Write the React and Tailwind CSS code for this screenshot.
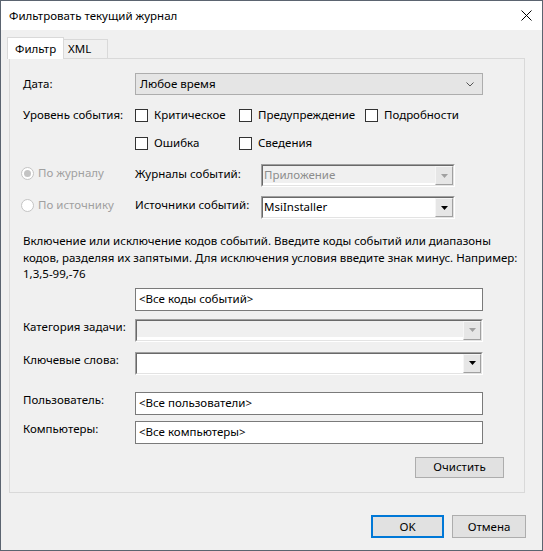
import React from 'react';

const font = { fontFamily: '"Noto Sans", "Open Sans", sans-serif' };

const Arrow = ({ disabled }) => (
  <svg width="7" height="4" viewBox="0 0 7 4">
    <path d="M0 0 H7 L3.5 4 Z" fill={disabled ? '#a0a0a0' : '#000'} />
  </svg>
);

// old-style sunken combo box with a raised drop button
const ClassicCombo = ({ text, disabled, className = '' }) => (
  <div
    className={`h-[23px] border border-t-[#a0a0a0] border-l-[#a0a0a0] border-b-white border-r-white ${className}`}
  >
    <div className="h-full flex border border-t-[#696969] border-l-[#696969] border-b-[#e3e3e3] border-r-[#e3e3e3]">
      <div
        className={`flex-1 flex flex-col ${disabled ? 'bg-[#f0f0f0]' : 'bg-white'}`}
      >
        <div className={`flex-1 pl-[1px] leading-[17px] ${disabled ? 'text-[#8d8d8d]' : 'text-black'}`}>
          {text}
        </div>
        {disabled && <div className="h-[3px] bg-white" />}
      </div>
      <div className="w-[18px] h-full flex items-center justify-center bg-[#e6e6e6] border border-t-[#f6f6f6] border-l-[#f6f6f6] border-b-[#a0a0a0] border-r-[#a0a0a0]">
        <Arrow disabled={disabled} />
      </div>
    </div>
  </div>
);

const TextBox = ({ text }) => (
  <div className="h-[23px] bg-white border border-[#7a7a7a] flex items-center pl-[3px]">{text}</div>
);

const CheckBox = ({ label, className = '' }) => (
  <div className={`flex items-center ${className}`}>
    <div className="w-[13px] h-[13px] bg-white border border-[#333]" />
    <span className="ml-[6px]">{label}</span>
  </div>
);

const Radio = ({ label, checked }) => (
  <div className="flex items-center -ml-[2px] w-[114px] h-[18px]">
    <div className="w-[13px] h-[13px] rounded-full bg-white border border-[#c4c4c4] flex items-center justify-center">
      {checked && <div className="w-[7px] h-[7px] rounded-full bg-[#c4c4c4]" />}
    </div>
    <span className="ml-[4px] text-[#a0a0a0]">{label}</span>
  </div>
);

const Button = ({ children, className = '' }) => (
  <div className={`bg-[#e1e1e1] border border-[#adadad] flex items-center justify-center ${className}`}>
    {children}
  </div>
);

export default function App() {
  return (
    <div
      className="w-[543px] h-[551px] flex flex-col bg-[#f0f0f0] border border-[#5b6470] text-[11.5px] text-black"
      style={font}
    >
      {/* Title bar */}
      <div className="h-[29px] bg-white flex items-center justify-between pl-[8px] pr-[10px]">
        <span>Фильтровать текущий журнал</span>
        <svg width="11" height="11" viewBox="0 0 11 11">
          <path d="M0.5 0.5 L10.5 10.5 M10.5 0.5 L0.5 10.5" stroke="#000" strokeWidth="1" />
        </svg>
      </div>

      {/* Tabs */}
      <div className="mt-[7px] ml-[6px] flex items-end relative z-10 -mb-px">
        <div className="h-[22px] w-[57px] bg-white border border-b-0 border-[#d9d9d9] flex items-center pl-[7px]">
          Фильтр
        </div>
        <div className="h-[19px] w-[44px] mb-px bg-[#f0f0f0] border border-b-0 border-l-0 border-[#d9d9d9] flex items-center pl-[4px]">
          XML
        </div>
      </div>

      {/* Tab panel */}
      <div className="ml-[8px] w-[516px] h-[435px] border border-[#d9d9d9] pl-[13px] flex flex-col">
        {/* Date */}
        <div className="mt-[14px] flex h-[22px]">
          <div className="w-[112px] flex items-center">Дата:</div>
          <div className="w-[348px] h-[22px] bg-[#e5e5e5] border border-[#adadad] flex items-center justify-between pl-[4px] pr-[8px]">
            <span>Любое время</span>
            <svg width="8" height="5" viewBox="0 0 8 5">
              <path d="M0.5 0.5 L4 4 L7.5 0.5" stroke="#555" fill="none" strokeWidth="1" />
            </svg>
          </div>
        </div>

        {/* Event level */}
        <div className="mt-[10px] flex h-[20px] items-center">
          <div className="w-[112px]">Уровень события:</div>
          <CheckBox label="Критическое" className="w-[104px]" />
          <CheckBox label="Предупреждение" className="w-[126px]" />
          <CheckBox label="Подробности" />
        </div>
        <div className="mt-[8px] flex h-[20px] items-center">
          <div className="w-[112px]" />
          <CheckBox label="Ошибка" className="w-[104px]" />
          <CheckBox label="Сведения" />
        </div>

        {/* Logs / sources */}
        <div className="mt-[11px] flex h-[23px] items-start">
          <Radio label="По журналу" checked />
          <div className="w-[126px] leading-[19px]">Журналы событий:</div>
          <ClassicCombo text="Приложение" disabled className="w-[194px]" />
        </div>
        <div className="mt-[9px] flex h-[23px] items-start">
          <Radio label="По источнику" />
          <div className="w-[126px] leading-[18px]">Источники событий:</div>
          <ClassicCombo text="MsiInstaller" className="w-[194px]" />
        </div>

        {/* Event IDs */}
        <p className="mt-[14px] leading-[16.5px] whitespace-nowrap">
          Включение или исключение кодов событий. Введите коды событий или диапазоны
          <br />
          кодов, разделяя их запятыми. Для исключения условия введите знак минус. Например:
          <br />
          1,3,5-99,-76
        </p>
        <div className="mt-[5px] flex">
          <div className="w-[112px]" />
          <div className="w-[348px]">
            <TextBox text="<Все коды событий>" />
          </div>
        </div>

        {/* Task category */}
        <div className="mt-[8px] flex">
          <div className="w-[112px] leading-[15px]">Категория задачи:</div>
          <ClassicCombo disabled className="w-[348px]" />
        </div>

        {/* Keywords */}
        <div className="mt-[10px] flex">
          <div className="w-[112px] leading-[15px]">Ключевые слова:</div>
          <ClassicCombo className="w-[348px]" />
        </div>

        {/* User / computer */}
        <div className="mt-[17px] flex">
          <div className="w-[112px] leading-[15px]">Пользователь:</div>
          <div className="w-[348px]">
            <TextBox text="<Все пользователи>" />
          </div>
        </div>
        <div className="mt-[6px] flex">
          <div className="w-[112px] leading-[15px]">Компьютеры:</div>
          <div className="w-[348px]">
            <TextBox text="<Все компьютеры>" />
          </div>
        </div>

        <div className="mt-[13px] flex">
          <div className="w-[392px]" />
          <Button className="w-[89px] h-[21px]">Очистить</Button>
        </div>
      </div>

      {/* Dialog buttons */}
      <div className="mt-[22px] flex pl-[370px] gap-[8px]">
        <div className="w-[73px] h-[23px] bg-[#e1e1e1] border-2 border-[#0078d7] flex items-center justify-center">
          OK
        </div>
        <Button className="w-[74px] h-[23px]">Отмена</Button>
      </div>
    </div>
  );
}
